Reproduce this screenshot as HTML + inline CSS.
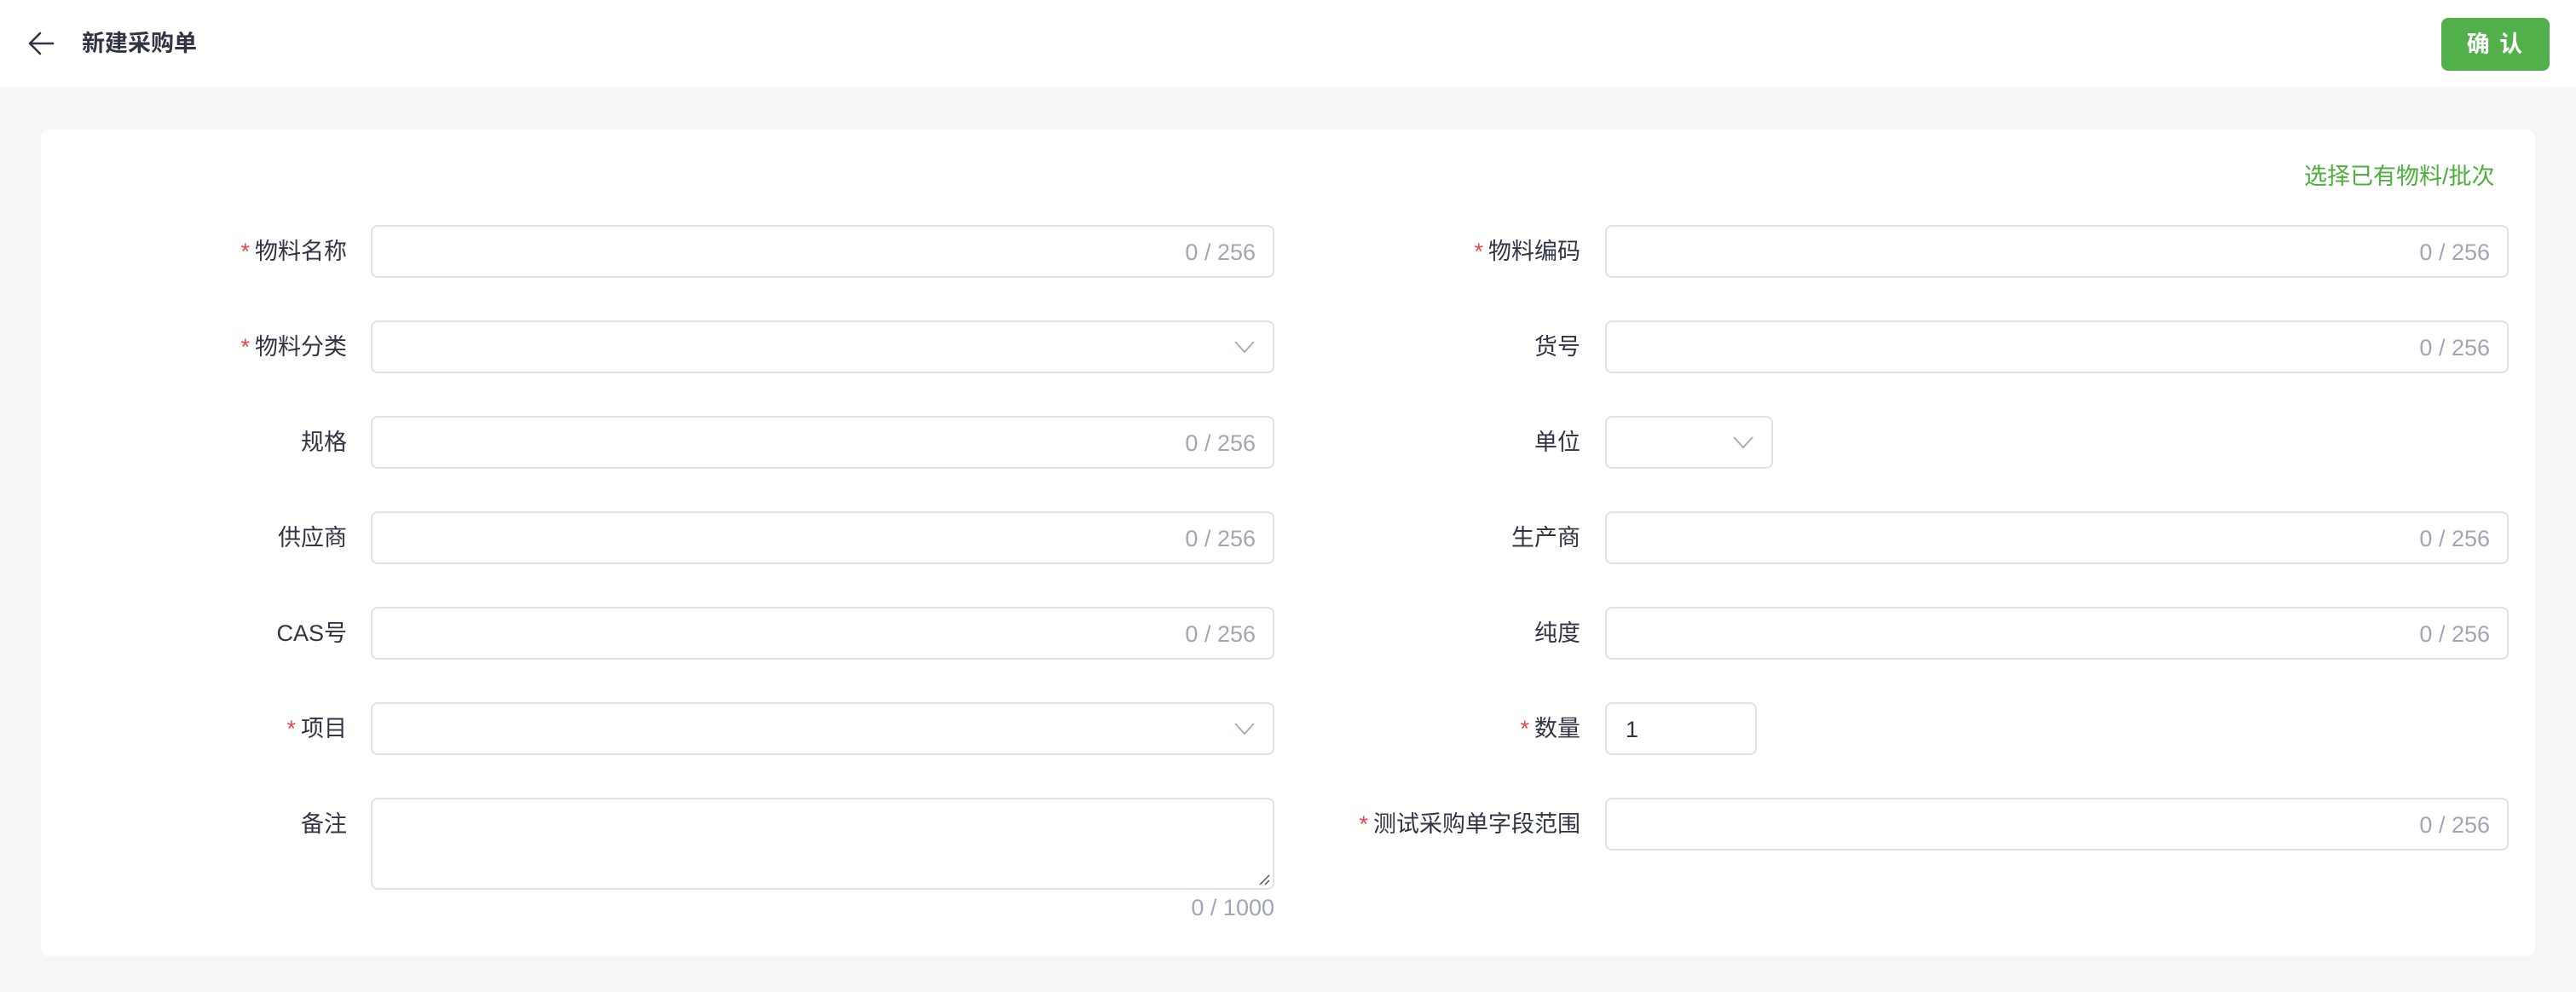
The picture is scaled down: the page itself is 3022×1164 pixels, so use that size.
<!DOCTYPE html>
<html><head><meta charset="utf-8"><style>
*{box-sizing:border-box;margin:0;padding:0}
body{width:3022px;height:1164px;background:#f5f6f8;font-family:"Liberation Sans","Noto Sans CJK SC",sans-serif;position:relative;overflow:hidden;color:#303444}
.hdr{position:absolute;left:0;top:0;width:3022px;height:102px;background:#fff}
.title{position:absolute;left:96px;top:32px;font-size:27px;font-weight:bold;line-height:38px;color:#303444}
.btn{position:absolute;left:2864px;top:21px;width:127px;height:62px;background:#52b04a;border-radius:8px;color:#fff;font-size:27px;font-weight:bold;line-height:62px;text-align:center;letter-spacing:2px}
.card{position:absolute;left:48px;top:152px;width:2926px;height:970px;background:#fff;border-radius:10px}
.link{position:absolute;font-size:27px;color:#4caf3c;line-height:38px}
.lbl{position:absolute;font-size:27px;line-height:38px;text-align:right;width:400px;white-space:nowrap}
.lbl b{color:#e5484d;font-weight:normal;margin-right:6px}
.in{position:absolute;height:62px;border:2px solid #dfe2e7;border-radius:8px;background:#fff}
.cnt{position:absolute;right:20px;top:11px;font-size:27px;line-height:38px;color:#a0a5b8}
.chev{position:absolute;right:20px;top:20px}
</style></head><body>
<div class="hdr">
<svg style="position:absolute;left:32px;top:36px" width="32" height="30" viewBox="0 0 32 30"><path d="M30 15H3M15 3L3 15l12 12" fill="none" stroke="#303444" stroke-width="2.6" stroke-linecap="round" stroke-linejoin="round"/></svg>
<div class="title">新建采购单</div>
<div class="btn">确 认</div>
</div>
<div class="card"></div>
<div class="link" style="left:2703px;top:188px">选择已有物料/批次</div>

<div class="lbl" style="left:7px;top:276px"><b>*</b>物料名称</div>
<div class="in" style="left:435px;top:264px;width:1060px"><span class="cnt">0 / 256</span></div>
<div class="lbl" style="left:1454px;top:276px"><b>*</b>物料编码</div>
<div class="in" style="left:1883px;top:264px;width:1060px"><span class="cnt">0 / 256</span></div>

<div class="lbl" style="left:7px;top:388px"><b>*</b>物料分类</div>
<div class="in" style="left:435px;top:376px;width:1060px"><svg class="chev" width="26" height="18" viewBox="0 0 26 18"><path d="M2 3l11 12L24 3" fill="none" stroke="#a8adbb" stroke-width="2"/></svg></div>
<div class="lbl" style="left:1454px;top:388px">货号</div>
<div class="in" style="left:1883px;top:376px;width:1060px"><span class="cnt">0 / 256</span></div>

<div class="lbl" style="left:7px;top:500px">规格</div>
<div class="in" style="left:435px;top:488px;width:1060px"><span class="cnt">0 / 256</span></div>
<div class="lbl" style="left:1454px;top:500px">单位</div>
<div class="in" style="left:1883px;top:488px;width:197px"><svg class="chev" width="26" height="18" viewBox="0 0 26 18"><path d="M2 3l11 12L24 3" fill="none" stroke="#a8adbb" stroke-width="2"/></svg></div>

<div class="lbl" style="left:7px;top:612px">供应商</div>
<div class="in" style="left:435px;top:600px;width:1060px"><span class="cnt">0 / 256</span></div>
<div class="lbl" style="left:1454px;top:612px">生产商</div>
<div class="in" style="left:1883px;top:600px;width:1060px"><span class="cnt">0 / 256</span></div>

<div class="lbl" style="left:7px;top:724px">CAS号</div>
<div class="in" style="left:435px;top:712px;width:1060px"><span class="cnt">0 / 256</span></div>
<div class="lbl" style="left:1454px;top:724px">纯度</div>
<div class="in" style="left:1883px;top:712px;width:1060px"><span class="cnt">0 / 256</span></div>

<div class="lbl" style="left:7px;top:836px"><b>*</b>项目</div>
<div class="in" style="left:435px;top:824px;width:1060px"><svg class="chev" width="26" height="18" viewBox="0 0 26 18"><path d="M2 3l11 12L24 3" fill="none" stroke="#a8adbb" stroke-width="2"/></svg></div>
<div class="lbl" style="left:1454px;top:836px"><b>*</b>数量</div>
<div class="in" style="left:1883px;top:824px;width:178px"><span style="position:absolute;left:22px;top:11px;font-size:27px;line-height:38px">1</span></div>

<div class="lbl" style="left:7px;top:948px">备注</div>
<div class="in" style="left:435px;top:936px;width:1060px;height:108px"><svg style="position:absolute;right:3px;bottom:3px" width="14" height="14" viewBox="0 0 14 14"><path d="M2 13L13 2M8 13l5-5" stroke="#555" stroke-width="1.5"/></svg></div>
<div style="position:absolute;left:1300px;width:195px;top:1046px;text-align:right;font-size:27px;line-height:38px;color:#a0a5b8">0 / 1000</div>
<div class="lbl" style="left:1454px;top:948px"><b>*</b>测试采购单字段范围</div>
<div class="in" style="left:1883px;top:936px;width:1060px"><span class="cnt">0 / 256</span></div>
</body></html>
